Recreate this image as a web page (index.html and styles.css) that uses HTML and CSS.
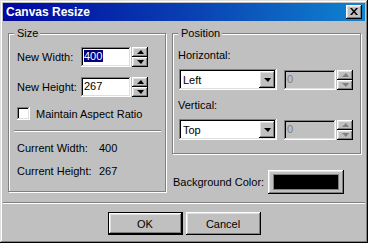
FILE: index.html
```html
<!DOCTYPE html>
<html lang="en">
<head>
  <meta charset="UTF-8" />
  <title>Canvas Resize</title>
  <link rel="stylesheet" href="styles.css">
</head>
<body>
  <div class="window">
    <div class="titlebar">
      <span class="title">Canvas Resize</span>
      <span class="close raised">
        <svg width="8" height="7" viewBox="0 0 8 7"><path d="M0 0h2l2 2.5L6 0h2L5 3.5 8 7H6L4 4.5 2 7H0l3-3.5z" fill="#000"/></svg>
      </span>
    </div>

    <div class="content">
      <div class="group size-group">
        <span class="legend">Size</span>
        <div class="dim-row">
          <span class="lbl">New Width:</span>
          <div class="field"><span class="sel">400</span></div>
          <div class="spin"><span class="spin-btn raised"><i class="up"></i></span><span class="spin-btn raised"><i class="down"></i></span></div>
        </div>
        <div class="dim-row">
          <span class="lbl">New Height:</span>
          <div class="field">267</div>
          <div class="spin"><span class="spin-btn raised"><i class="up"></i></span><span class="spin-btn raised"><i class="down"></i></span></div>
        </div>
        <div class="check-row">
          <span class="checkbox"></span>
          <span>Maintain Aspect Ratio</span>
        </div>
        <div class="etched-line"></div>
        <div class="info-row"><span class="lbl-wide">Current Width:</span><span>400</span></div>
        <div class="info-row"><span class="lbl-wide">Current Height:</span><span>267</span></div>
      </div>

      <div class="right-col">
        <div class="group pos-group">
          <span class="legend">Position</span>
          <div class="pos-label">Horizontal:</div>
          <div class="pos-row">
            <div class="combo"><span class="combo-text">Left</span><span class="combo-btn raised"><i class="down"></i></span></div>
            <div class="field disabled">0</div>
            <div class="spin disabled"><span class="spin-btn raised"><i class="up"></i></span><span class="spin-btn raised"><i class="down"></i></span></div>
          </div>
          <div class="pos-label">Vertical:</div>
          <div class="pos-row">
            <div class="combo"><span class="combo-text">Top</span><span class="combo-btn raised"><i class="down"></i></span></div>
            <div class="field disabled">0</div>
            <div class="spin disabled"><span class="spin-btn raised"><i class="up"></i></span><span class="spin-btn raised"><i class="down"></i></span></div>
          </div>
        </div>
        <div class="bg-row">
          <span class="bg-label">Background Color:</span>
          <span class="color-btn raised"><span class="swatch"></span></span>
        </div>
      </div>
    </div>

    <div class="etched-line full"></div>

    <div class="buttons">
      <span class="btn raised default">OK</span>
      <span class="btn raised">Cancel</span>
    </div>
  </div>
</body>
</html>
```

FILE: styles.css
```css
body {
  margin: 0;
  font-family: "Liberation Sans", Arial, sans-serif;
  font-size: 11px;
  color: #000;
  background: #c0c0c0;
}
.window {
  width: 368px;
  height: 243px;
  box-sizing: border-box;
  padding: 3px;
  background: #c0c0c0;
  box-shadow: inset -1px -1px #000, inset 1px 1px #dfdfdf, inset -2px -2px #808080, inset 2px 2px #fff;
}
.raised {
  background: #c0c0c0;
  box-shadow: inset -1px -1px #000, inset 1px 1px #fff, inset -2px -2px #808080, inset 2px 2px #dfdfdf;
}
.titlebar {
  height: 18px;
  display: flex;
  align-items: center;
  justify-content: space-between;
  padding: 0 3px 0 3px;
  background: linear-gradient(to right, #0008a0, #0a44b4 55%, #1084d0);
}
.title {
  color: #fff;
  font-weight: bold;
  font-size: 12px;
}
.close {
  width: 16px;
  height: 14px;
  display: flex;
  align-items: center;
  justify-content: center;
}
.close svg { margin-left: -1px; margin-top: -1px; }

.content {
  display: flex;
  gap: 6px;
  padding: 12px 0 0 5px;
}
.group {
  position: relative;
  border: 1px solid #808080;
  box-shadow: inset 1px 1px #fff, 1px 1px #fff;
  box-sizing: border-box;
}
.legend {
  position: absolute;
  top: -7px;
  left: 5px;
  padding: 0 2px 0 3px;
  background: #c0c0c0;
  line-height: 13px;
}
.size-group {
  width: 158px;
  height: 159px;
  padding: 13px 4px 0 8px;
}
.dim-row {
  display: flex;
  align-items: center;
  height: 20px;
  margin-bottom: 10px;
}
.lbl { width: 64px; }
.field {
  width: 50px;
  height: 20px;
  box-sizing: border-box;
  padding: 3px 0 0 3px;
  background: #fff;
  line-height: 13px;
  box-shadow: inset -1px -1px #fff, inset 1px 1px #808080, inset -2px -2px #dfdfdf, inset 2px 2px #000;
}
.sel {
  background: #000080;
  color: #fff;
  padding-right: 1px;
}
.spin {
  width: 16px;
  height: 20px;
  margin-left: 1px;
  display: flex;
  flex-direction: column;
}
.spin-btn {
  flex: 1;
  display: flex;
  align-items: center;
  justify-content: center;
}
.up, .down {
  width: 0;
  height: 0;
  border-left: 4px solid transparent;
  border-right: 3px solid transparent;
}
.up { border-bottom: 4px solid #000; }
.down { border-top: 4px solid #000; }
.spin.disabled .up { border-bottom-color: #808080; }
.spin.disabled .down { border-top-color: #808080; }
.field.disabled {
  background: #c0c0c0;
  color: #808080;
  width: 52px;
}
.check-row {
  display: flex;
  align-items: center;
  gap: 6px;
  margin-top: 5px;
}
.checkbox {
  width: 13px;
  height: 13px;
  box-sizing: border-box;
  background: #fff;
  box-shadow: inset -1px -1px #fff, inset 1px 1px #808080, inset -2px -2px #dfdfdf, inset 2px 2px #000;
}
.etched-line {
  height: 1px;
  border-bottom: 1px solid #fff;
  background: #808080;
  margin: 10px 0 10px -3px;
}
.info-row {
  display: flex;
  line-height: 13px;
  height: 23px;
}
.lbl-wide { width: 82px; }

.right-col {
  display: flex;
  flex-direction: column;
}
.pos-group {
  width: 189px;
  height: 121px;
  padding: 15px 0 0 6px;
}
.pos-label {
  line-height: 13px;
  margin-left: -1px;
}
.pos-row {
  display: flex;
  align-items: center;
  margin: 7px 0 9px 0;
}
.combo {
  width: 98px;
  height: 21px;
  box-sizing: border-box;
  display: flex;
  align-items: center;
  justify-content: space-between;
  padding: 2px;
  margin-right: 7px;
  background: #fff;
  box-shadow: inset -1px -1px #fff, inset 1px 1px #808080, inset -2px -2px #dfdfdf, inset 2px 2px #000;
}
.combo-text { padding-left: 2px; }
.combo-btn {
  width: 16px;
  height: 17px;
  display: flex;
  align-items: center;
  justify-content: center;
}
.bg-row {
  display: flex;
  align-items: center;
  margin-top: 16px;
  margin-left: 1px;
}
.bg-label { width: 95px; }
.color-btn {
  width: 76px;
  height: 24px;
  box-sizing: border-box;
  padding: 5px 6px;
}
.swatch {
  display: block;
  height: 14px;
  background: #000;
  box-shadow: 0 0 0 1px #808080;
}
.etched-line.full {
  margin: 8px 0 0 0;
}
.buttons {
  display: flex;
  justify-content: center;
  gap: 3px;
  margin-top: 8px;
}
.btn {
  width: 75px;
  height: 23px;
  display: flex;
  align-items: center;
  justify-content: center;
}
.btn.default {
  box-shadow: inset 0 0 0 1px #000, inset -2px -2px #000, inset 2px 2px #fff, inset -3px -3px #808080, inset 3px 3px #dfdfdf;
}
```
